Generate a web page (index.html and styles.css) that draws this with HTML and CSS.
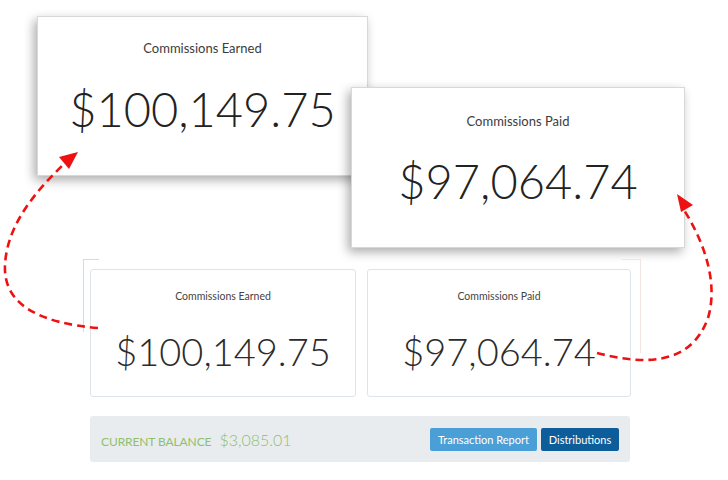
FILE: index.html
```html
<!DOCTYPE html>
<html lang="en">
<head>
<meta charset="utf-8">
<title>Commissions</title>
<link rel="stylesheet" href="styles.css">
</head>
<body>
<main class="stage">
  <section class="panel">
    <div class="cards">
      <div class="card card-earned">
        <div class="card-title">Commissions Earned</div>
        <div class="card-amount">$100,149.75</div>
      </div>
      <div class="card card-paid">
        <div class="card-title">Commissions Paid</div>
        <div class="card-amount">$97,064.74</div>
      </div>
    </div>
  </section>

  <div class="balance-bar">
    <div class="balance">
      <span class="balance-label">CURRENT BALANCE</span>
      <span class="balance-value">$3,085.01</span>
    </div>
    <div class="actions">
      <button class="btn btn-light">Transaction Report</button>
      <button class="btn btn-dark">Distributions</button>
    </div>
  </div>

  <div class="zoom zoom-earned">
    <div class="zoom-title">Commissions Earned</div>
    <div class="zoom-amount">$100,149.75</div>
  </div>
  <div class="zoom zoom-paid">
    <div class="zoom-title">Commissions Paid</div>
    <div class="zoom-amount">$97,064.74</div>
  </div>

  <svg class="arrows" width="728" height="480" viewBox="0 0 728 480">
    <path class="edge-left" d="M83.5,259 V332 M83,259.5 H99"/>
    <path class="edge-right" d="M640.5,259 V353 M622,259.5 H640"/>
    <path class="arrow-line" d="M98,328 C40,323 3,305 5,265 C7,225 35,192 64,164"/>
    <polygon class="arrow-head" points="78,152 59,157 69,169"/>
    <path class="arrow-line" d="M597,353 C640,364 690,368 708,318 C718,285 706,245 684,210"/>
    <polygon class="arrow-head" points="677,194 681,212 693,205"/>
  </svg>
</main>
</body>
</html>
```

FILE: styles.css
```css
* { box-sizing: border-box; }

html, body {
  margin: 0;
  padding: 0;
  background: #ffffff;
}

body {
  font-family: Lato, "Liberation Sans", sans-serif;
  color: #333;
}

.stage {
  position: relative;
  width: 728px;
  height: 480px;
  overflow: hidden;
  padding: 258px 0 0 84px;
}

.panel {
  width: 557px;
  height: 146px;
  padding: 11px 0 0 6px;
}

.cards {
  display: flex;
  gap: 11px;
}

.card {
  height: 128px;
  border: 1px solid #dfe4e8;
  border-radius: 3px;
  background: #fff;
  text-align: center;
  padding-top: 20px;
}

.card-earned { width: 266px; }
.card-paid { width: 264px; }

.card-title {
  font-size: 10.5px;
  line-height: 13px;
  color: #444;
}

.card-amount {
  margin-top: 25px;
  font-size: 38px;
  line-height: 46px;
  font-weight: 300;
  color: #2b2b2b;
}

.balance-bar {
  width: 540px;
  height: 46px;
  margin: 12px 0 0 6px;
  background: #e9ecef;
  border-radius: 3px;
  display: flex;
  align-items: center;
  justify-content: space-between;
  padding: 0 11px 0 11px;
}

.balance {
  display: flex;
  align-items: baseline;
  gap: 8px;
  color: #8fbf6b;
}

.balance-label {
  font-size: 12px;
  letter-spacing: -0.1px;
}

.balance-value {
  font-size: 16px;
  font-weight: 300;
}

.actions {
  display: flex;
  gap: 4px;
}

.btn {
  font-family: Lato, "Liberation Sans", sans-serif;
  font-size: 11px;
  height: 23px;
  border: none;
  border-radius: 2px;
  color: #fff;
  padding: 0 6px;
}

.btn-light { background: #4a9fd6; width: 107px; }
.btn-dark { background: #0e5d9b; width: 78px; }

.zoom {
  position: absolute;
  background: #fff;
  border: 1px solid #d8d8d8;
  box-shadow: -3px 4px 10px rgba(0, 0, 0, 0.33);
  text-align: center;
}

.zoom-earned {
  left: 37px;
  top: 16px;
  width: 331px;
  height: 160px;
  padding-top: 23px;
}

.zoom-paid {
  left: 351px;
  top: 87px;
  width: 334px;
  height: 161px;
  padding-top: 25px;
}

.zoom-title {
  font-size: 13px;
  line-height: 16px;
  color: #3c3c3c;
}

.zoom-amount {
  margin-top: 24px;
  font-size: 47px;
  line-height: 58px;
  font-weight: 300;
  color: #222;
}

.zoom-paid .zoom-amount { margin-top: 23px; }

.arrows {
  position: absolute;
  left: 0;
  top: 0;
  pointer-events: none;
}

.edge-left {
  fill: none;
  stroke: #f7cccc;
  stroke-width: 1;
}

.edge-right {
  fill: none;
  stroke: #f3e4e4;
  stroke-width: 1;
}

.arrow-line {
  fill: none;
  stroke: #ee1111;
  stroke-width: 2.6;
  stroke-dasharray: 8 5;
}

.arrow-head {
  fill: #ee1111;
}
```
